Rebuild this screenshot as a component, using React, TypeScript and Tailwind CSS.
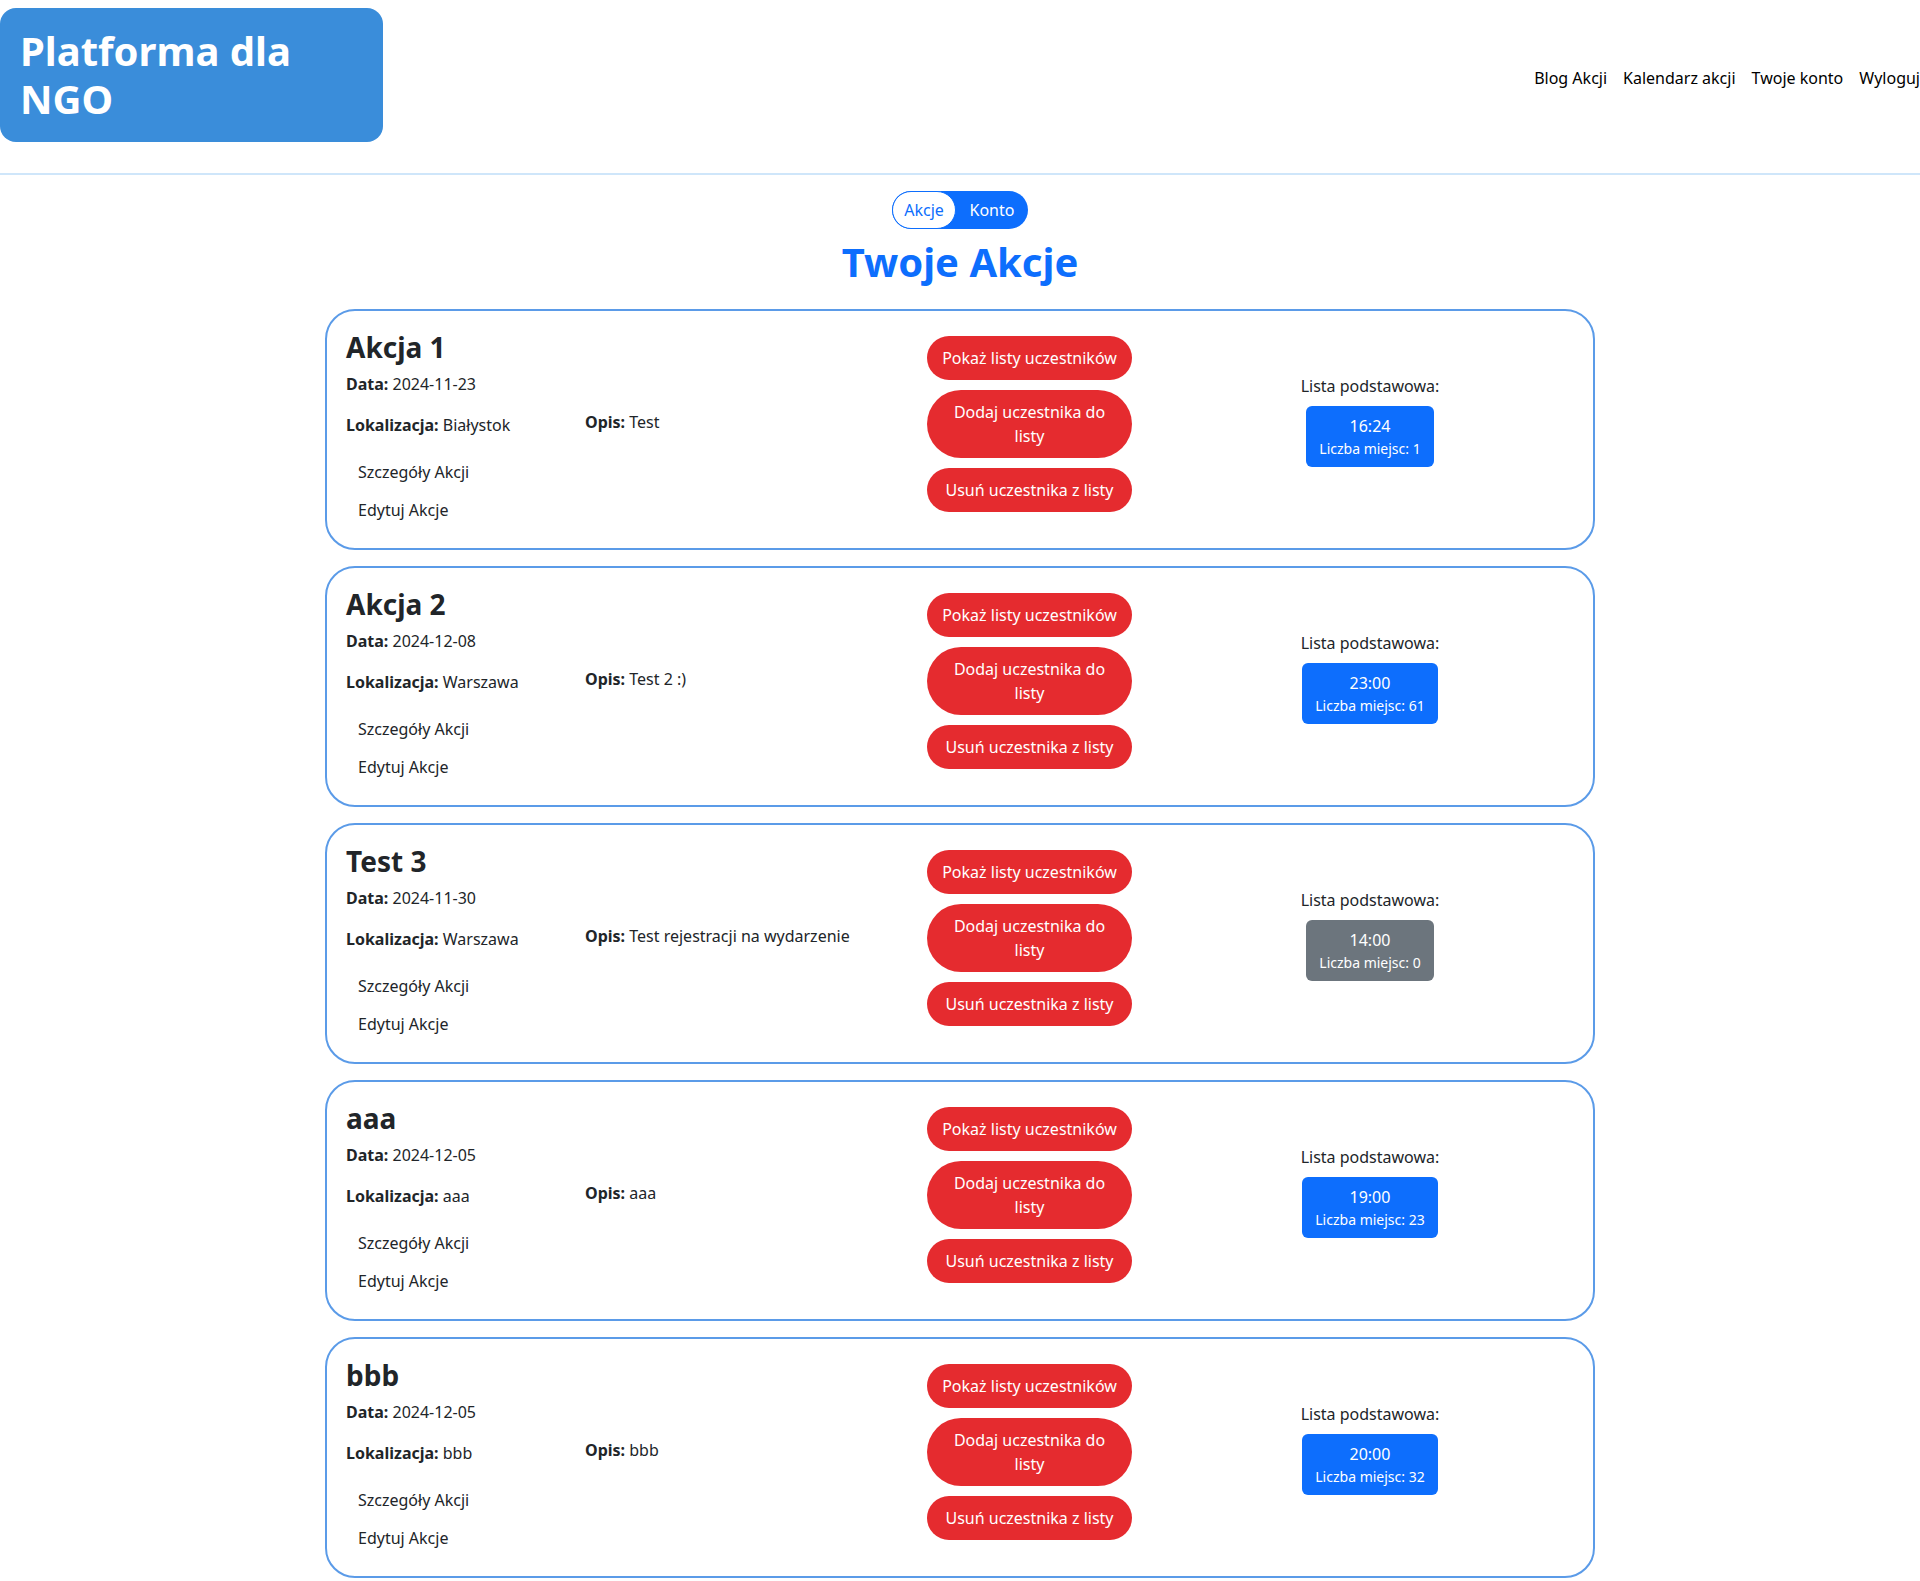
import React from "react";

type Akcja = {
    title: string;
    date: string;
    location: string;
    desc: string;
    time: string;
    seats: number;
};

const akcje: Akcja[] = [
    { title: "Akcja 1", date: "2024-11-23", location: "Białystok", desc: "Test", time: "16:24", seats: 1 },
    { title: "Akcja 2", date: "2024-12-08", location: "Warszawa", desc: "Test 2 :)", time: "23:00", seats: 61 },
    { title: "Test 3", date: "2024-11-30", location: "Warszawa", desc: "Test rejestracji na wydarzenie", time: "14:00", seats: 0 },
    { title: "aaa", date: "2024-12-05", location: "aaa", desc: "aaa", time: "19:00", seats: 23 },
    { title: "bbb", date: "2024-12-05", location: "bbb", desc: "bbb", time: "20:00", seats: 32 },
];

function Header() {
    return (
        <header className="flex items-start justify-between pt-2 h-[175px] border-b-2 border-[#cfe6fa]">
            <div className="w-[383px] bg-[#3a8dda] rounded-2xl pl-5 pr-4 py-[19px]">
                <h1 className="text-[40px] leading-[48px] font-bold text-white">Platforma dla NGO</h1>
            </div>
            <nav className="flex items-center gap-4 mt-[58px] text-base leading-6 text-black">
                <a href="#">Blog Akcji</a>
                <a href="#">Kalendarz akcji</a>
                <a href="#">Twoje konto</a>
                <a href="#">Wyloguj</a>
            </nav>
        </header>
    );
}

function ActionCard({ akcja }: { akcja: Akcja }) {
    const full = akcja.seats === 0;
    return (
        <div className="w-[1270px] mx-auto border-2 border-[#5b9be8] rounded-[30px] p-[19px] flex text-[#212529]">
            {/* Details */}
            <div className="w-[581px] shrink-0">
                <h3 className="text-[28px] leading-[34px] font-bold mb-2">{akcja.title}</h3>
                <p className="leading-6 mb-[17px]">
                    <b>Data:</b> {akcja.date}
                </p>
                <div className="flex mb-4">
                    <p className="w-[239px] leading-6">
                        <b>Lokalizacja:</b> {akcja.location}
                    </p>
                    <p className="leading-6 -mt-[3px]">
                        <b>Opis:</b> {akcja.desc}
                    </p>
                </div>
                <div className="flex flex-col">
                    <a href="#" className="px-3 py-[7px] leading-6">Szczegóły Akcji</a>
                    <a href="#" className="px-3 py-[7px] leading-6">Edytuj Akcje</a>
                </div>
            </div>

            {/* Actions */}
            <div className="w-[205px] shrink-0 flex flex-col gap-[10px] pt-[6px]">
                <button className="bg-[#e52b2f] text-white rounded-full px-2 py-[10px] leading-6 whitespace-nowrap">Pokaż listy uczestników</button>
                <button className="bg-[#e52b2f] text-white rounded-full px-4 py-[10px] leading-6">Dodaj uczestnika do listy</button>
                <button className="bg-[#e52b2f] text-white rounded-full px-2 py-[10px] leading-6 whitespace-nowrap">Usuń uczestnika z listy</button>
            </div>

            {/* Lists */}
            <div className="w-[300px] ml-[88px] shrink-0 flex flex-col items-center pt-[44px]">
                <p className="leading-6 mb-2">Lista podstawowa:</p>
                <div className={`${full ? "bg-[#6c757d]" : "bg-[#0d6efd]"} text-white rounded-md px-[13px] py-2 flex flex-col items-center`}>
                    <span className="leading-6">{akcja.time}</span>
                    <span className="text-sm leading-[21px]">Liczba miejsc: {akcja.seats}</span>
                </div>
            </div>
        </div>
    );
}

export default function App() {
    return (
        <div className="min-h-screen bg-white" style={{ fontFamily: '"Noto Sans", "Open Sans", sans-serif' }}>
            <Header />

            <div className="flex flex-col items-center pt-[16px]">
                <div className="flex items-center rounded-full bg-[#0d6efd] h-[38px] w-[136px]">
                    <button className="h-[38px] px-[9px] w-[64px] rounded-full bg-white border border-[#0d6efd] text-[#0d6efd] leading-6">Akcje</button>
                    <button className="flex-1 text-white leading-6">Konto</button>
                </div>
                <h2 className="text-[40px] leading-[48px] font-bold text-[#0d6efd] mt-[9px]">Twoje Akcje</h2>
            </div>

            <div className="flex flex-col gap-[16px] mt-[23px] pb-4">
                {akcje.map((a) => (
                    <ActionCard key={a.title} akcja={a} />
                ))}
            </div>
        </div>
    );
}
